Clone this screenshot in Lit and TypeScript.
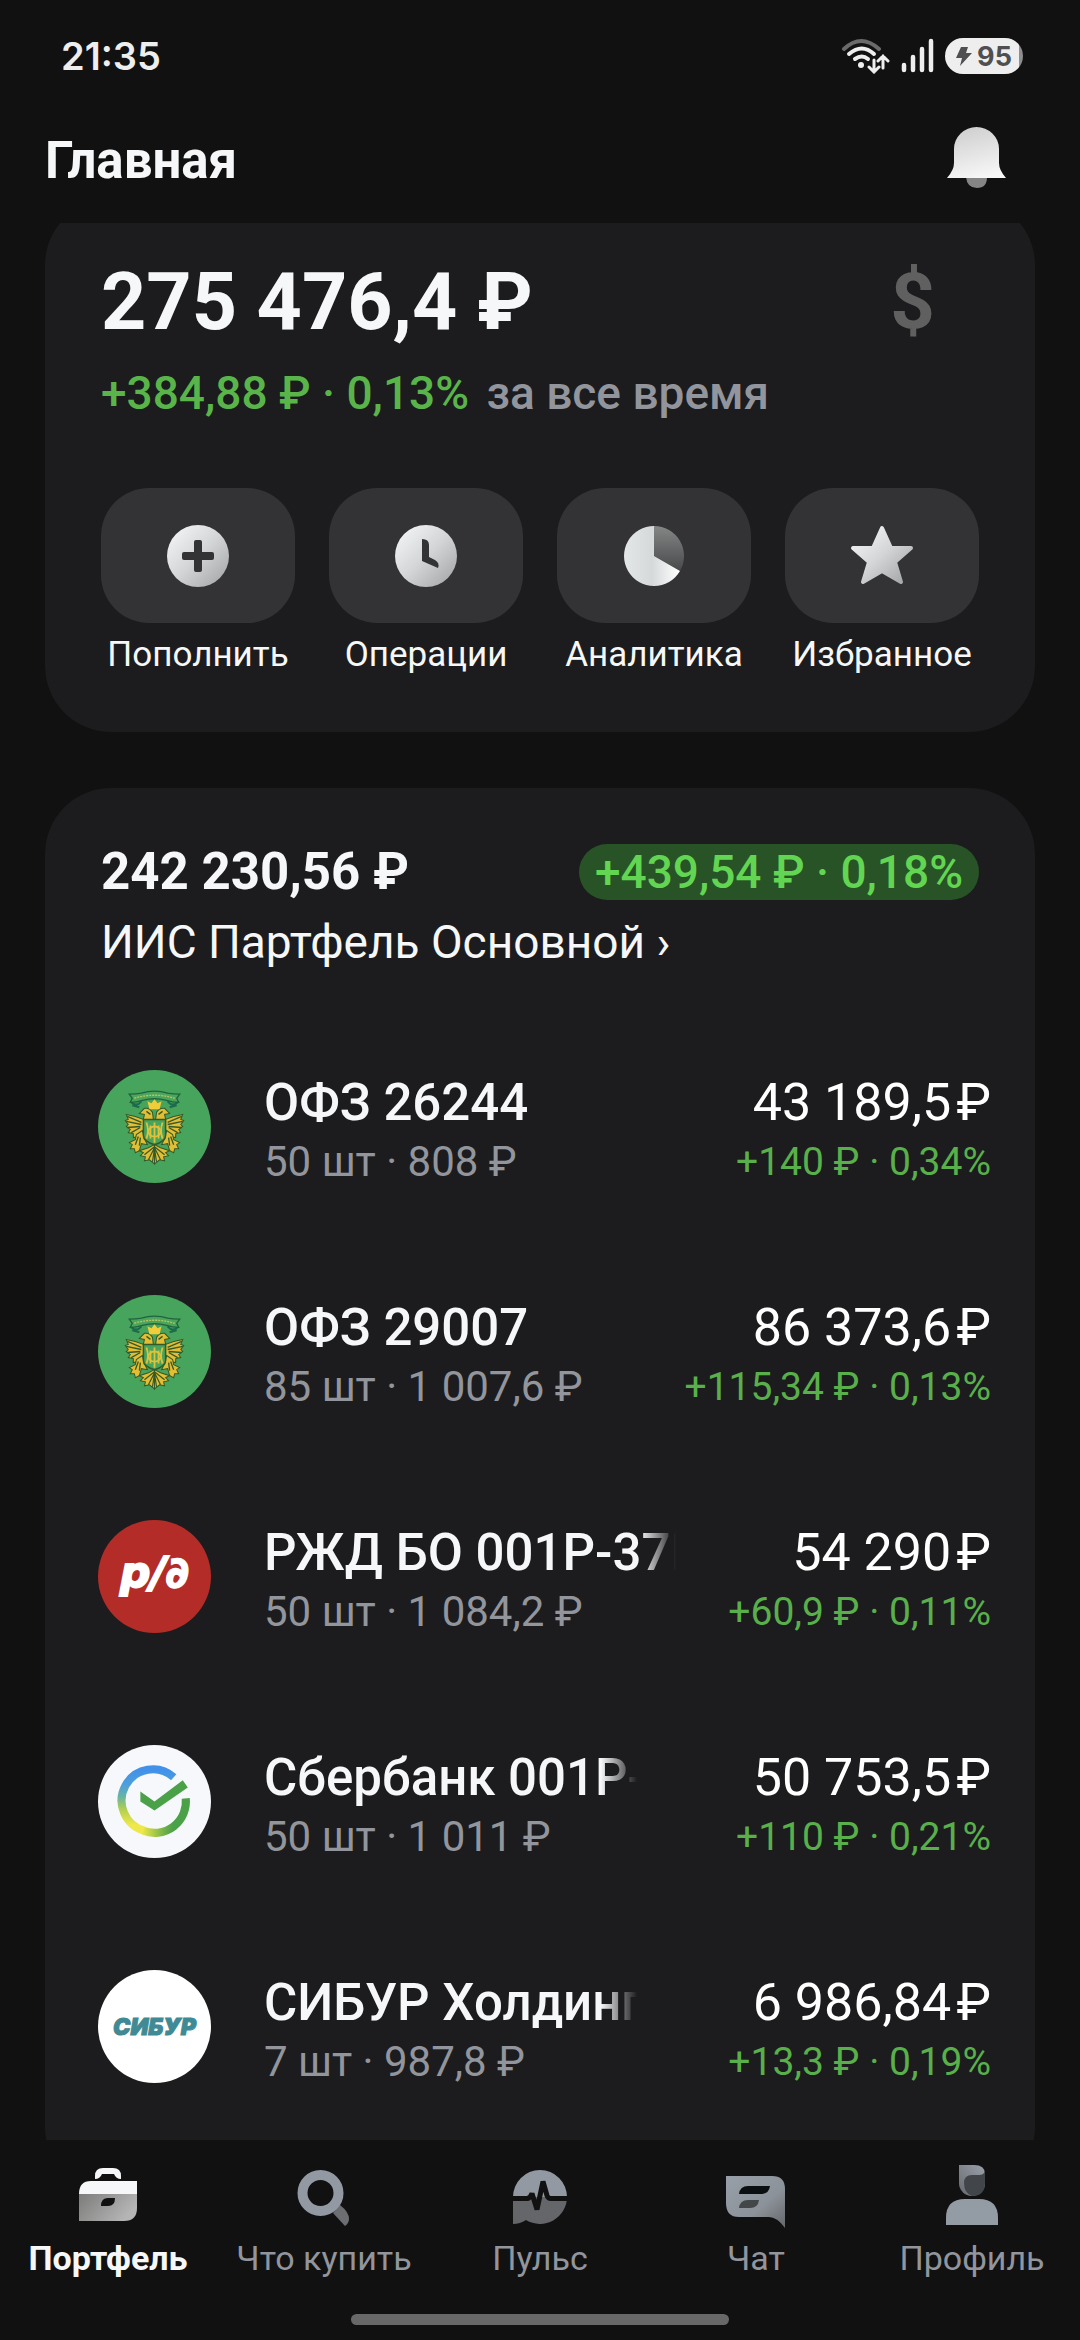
import { LitElement, html, css, svg, nothing } from 'lit';
import type { TemplateResult } from 'lit';
import { customElement, property } from 'lit/decorators.js';
import { classMap } from 'lit/directives/class-map.js';

interface Position {
  logo: string;
  name: string;
  amount: string;
  details: string;
  change: string;
  truncated?: boolean;
}

interface Item {
  icon: string;
  label: string;
}

const ACTIONS: Item[] = [
  { icon: 'plus', label: 'Пополнить' },
  { icon: 'clock', label: 'Операции' },
  { icon: 'pie', label: 'Аналитика' },
  { icon: 'star', label: 'Избранное' },
];

const TABS: Item[] = [
  { icon: 'briefcase', label: 'Портфель' },
  { icon: 'search', label: 'Что купить' },
  { icon: 'pulse', label: 'Пульс' },
  { icon: 'chat', label: 'Чат' },
  { icon: 'profile', label: 'Профиль' },
];

// \u200A keeps the rouble sign close to the amount
const POSITIONS: Position[] = [
  { logo: 'ofz', name: 'ОФЗ 26244', amount: '43 189,5\u200A₽', details: '50 шт · 808 ₽', change: '+140 ₽ · 0,34%' },
  { logo: 'ofz', name: 'ОФЗ 29007', amount: '86 373,6\u200A₽', details: '85 шт · 1 007,6 ₽', change: '+115,34 ₽ · 0,13%' },
  { logo: 'rzd', name: 'РЖД БО 001P-37R', amount: '54 290\u200A₽', details: '50 шт · 1 084,2 ₽', change: '+60,9 ₽ · 0,11%', truncated: true },
  { logo: 'sber', name: 'Сбербанк 001P-SBER', amount: '50 753,5\u200A₽', details: '50 шт · 1 011 ₽', change: '+110 ₽ · 0,21%', truncated: true },
  { logo: 'sibur', name: 'СИБУР Холдинг', amount: '6 986,84\u200A₽', details: '7 шт · 987,8 ₽', change: '+13,3 ₽ · 0,19%', truncated: true },
];

const silver = svg`
  <linearGradient id="silver" x1="0" y1="0" x2="1" y2="1">
    <stop offset="0.1" stop-color="#f0f2f3" />
    <stop offset="0.5" stop-color="#d3d5d6" />
    <stop offset="0.9" stop-color="#a9abac" />
  </linearGradient>`;

const actionIcons: Record<string, TemplateResult> = {
  plus: html`<svg viewBox="0 0 64 64" aria-hidden="true">
    <defs>${silver}</defs>
    <circle cx="32" cy="32" r="31" fill="url(#silver)" />
    <path d="M28 18q0-2 2-2h4q2 0 2 2v10h10q2 0 2 2v4q0 2-2 2H36v10q0 2-2 2h-4q-2 0-2-2V36H18q-2 0-2-2v-4q0-2 2-2h10z" fill="#333335" />
  </svg>`,
  clock: html`<svg viewBox="0 0 64 64" aria-hidden="true">
    <defs>${silver}</defs>
    <circle cx="32" cy="32" r="31" fill="url(#silver)" />
    <path d="M28 15q7 0 7 6v12l6 3q5 3 3 8L28 37z" fill="#333335" />
  </svg>`,
  pie: html`<svg viewBox="0 0 64 64" aria-hidden="true">
    <defs>
      <linearGradient id="slice" x1="0" y1="0" x2="0" y2="1">
        <stop offset="0" stop-color="#858686" />
        <stop offset="1" stop-color="#48494a" />
      </linearGradient>
      <linearGradient id="rest" x1="0" y1="0" x2="1" y2="0">
        <stop offset="0" stop-color="#e4e7e8" />
        <stop offset="0.5" stop-color="#d6d9da" />
        <stop offset="1" stop-color="#ffffff" />
      </linearGradient>
    </defs>
    <path d="M32 32V2A30 30 0 0 1 58 47z" fill="url(#slice)" />
    <path d="M32 32V2A30 30 0 1 0 58 47z" fill="url(#rest)" />
  </svg>`,
  star: html`<svg viewBox="0 0 64 64" aria-hidden="true">
    <defs>${silver}</defs>
    <path
      d="M32 4 41 24 61 24 45 38 51 58 32 47 13 58 19 38 3 24 23 24z"
      fill="url(#silver)" stroke="url(#silver)" stroke-width="4" stroke-linejoin="round"
    />
  </svg>`,
};

const tabIcons: Record<string, TemplateResult> = {
  briefcase: html`<svg viewBox="0 0 72 72" aria-hidden="true">
    <defs>
      <linearGradient id="case" x1="0" y1="0" x2="1" y2="0.4">
        <stop offset="0" stop-color="#7c7d7b" />
        <stop offset="1" stop-color="#b4b5b4" />
      </linearGradient>
    </defs>
    <path d="M23 19v-3q0-8 8-8h10q8 0 8 8v3q-5 0-7-5H30q-2 5-7 5z" fill="#f6f7f8" />
    <path d="M7 34q0-13 12-13h46v13z" fill="#f6f7f8" />
    <path d="M7 34h58v14q0 13-13 13H7z" fill="url(#case)" />
    <path d="M29 46q0-8 7-8h7q0 8-7 8z" fill="#111" />
  </svg>`,
  search: html`<svg viewBox="0 0 72 72" aria-hidden="true">
    <path d="M45 53 52 45q9 7 9 14 0 4-4 7z" fill="#6d6e72" />
    <circle cx="32.5" cy="33" r="18" fill="none" stroke="#9299a2" stroke-width="10" />
  </svg>`,
  pulse: html`<svg viewBox="0 0 72 72" aria-hidden="true">
    <path d="M9 37a27 27 0 0 1 54 0z" fill="#9299a2" />
    <path d="M9 37h54a27 27 0 0 1-41 23q-6 4-13 4z" fill="#65666a" />
    <path d="M8 38.5h15q3 0 5-5l5 16 6-28 4 14q1 3 4 3h17" fill="none" stroke="#111" stroke-width="5" stroke-linejoin="bevel" />
  </svg>`,
  chat: html`<svg viewBox="0 0 72 72" aria-hidden="true">
    <defs>
      <linearGradient id="bubble" x1="0" y1="0" x2="1" y2="1">
        <stop offset="0" stop-color="#989fa8" />
        <stop offset="0.6" stop-color="#8c9299" />
        <stop offset="1" stop-color="#65676a" />
      </linearGradient>
    </defs>
    <path d="M6 16h46q13 0 13 13v39Q57 57 49 57H19Q6 57 6 43z" fill="url(#bubble)" />
    <path d="M19 34q1-8 9-8h22q-1 8-9 8z" fill="#0b0f12" />
    <path d="M19 48q1-8 9-8h11q-1 8-9 8z" fill="#43474a" />
  </svg>`,
  profile: html`<svg viewBox="0 0 72 72" aria-hidden="true">
    <defs>
      <linearGradient id="hair" x1="1" y1="0" x2="0" y2="1">
        <stop offset="0" stop-color="#9aa1aa" />
        <stop offset="1" stop-color="#66696e" />
      </linearGradient>
    </defs>
    <path d="M23 5h15q11 0 11 9v9a13 13 0 0 1-26 0z" fill="url(#hair)" />
    <path d="M28 23q0-8 8-8h7q5 0 6-4v12q0 13-13 13-8-3-8-13z" fill="#42464a" />
    <path d="M10 65V58q0-19 19-19h14q19 0 19 19v7z" fill="#939ba5" />
  </svg>`,
};

// Left half of the emblem; it is mirrored for the right one
const eagleHalf = svg`
  <g fill="#e3bd32" stroke="#34592a" stroke-width="1">
    <path d="M54 42q-3-5-8-4l-5 5 5 1-1 5-8-3-9-2 2 5-3 1 3 4-2 2 4 3-2 3 5 1 0 4 6-1 5-8V50h9z" />
    <path d="M44 60l-6 4-1 5-6 3 3 2-2 4 4 0 1 4 4-2 2-7 6 1-3-6z" />
    <path d="M56 74l-6 3-9 3 4 2-3 3 5 1-1 4 5-1 5 4z" />
  </g>
  <path d="M29 46l14 6M28 51l15 3M29 57l13-1M33 62l9-5M40 66l-3 8M42 67l-1 8M48 41l4 3" fill="none" stroke="#34592a" stroke-width="1.3" />
  <path d="M56 76l-10 8M56 77l-6 12M56 78l-2 13" fill="none" stroke="#34592a" stroke-width="1.2" />
  <path d="M33 32q5 5 10-1M34 35l7 2" fill="none" stroke="#1c6b4c" stroke-width="2" />`;

const logos: Record<string, TemplateResult> = {
  ofz: html`<svg viewBox="0 0 112 112" aria-hidden="true">
    <circle cx="56" cy="56" r="56" fill="#47a45c" />
    ${eagleHalf}
    <g transform="matrix(-1 0 0 1 112 0)">${eagleHalf}</g>
    <path d="M31 24q7 0 12-1 13-4 26 0 5 1 12 1l-3 4 2 4q-6 0-12-2-12-3-24 0-6 2-12 2l2-4z" fill="#4ba65c" stroke="#20633f" stroke-width="1.3" />
    <path d="M36 28q20-6 40 0" fill="none" stroke="#b9c565" stroke-width="1.3" stroke-dasharray="2 1" />
    <path d="M51 39l-2-8 4 2 3-4 3 4 4-2-2 8z" fill="#f1cd3a" />
    <path d="M45 49h22v16q0 6-11 9-11-3-11-9z" fill="#47a45c" stroke="#34592a" stroke-width="1.5" />
    <g fill="none" stroke="#dfc13c" stroke-width="1.8">
      <path d="M48 52q3 8 0 16M64 52q-3 8 0 16M56 52v20M52 55v13M60 55v13" />
      <ellipse cx="56" cy="61" rx="6" ry="5" />
    </g>
  </svg>`,
  rzd: html`<svg viewBox="0 0 112 112" aria-hidden="true">
    <circle cx="56" cy="56" r="56" fill="#b32c28" />
    <text class="mark-rzd" x="56" y="66" text-anchor="middle">р/∂</text>
  </svg>`,
  sber: html`<svg viewBox="0 0 112 112" aria-hidden="true">
    <defs>
      <linearGradient id="ring-left" x1="0" y1="0" x2="0" y2="1">
        <stop offset="0" stop-color="#4190ea" />
        <stop offset="0.25" stop-color="#4f9fdd" />
        <stop offset="0.45" stop-color="#68b5a0" />
        <stop offset="0.65" stop-color="#b2cf50" />
        <stop offset="0.9" stop-color="#eee84a" />
      </linearGradient>
      <linearGradient id="ring-right" x1="0" y1="0" x2="1" y2="0">
        <stop offset="0" stop-color="#e6e54a" />
        <stop offset="0.5" stop-color="#6fb048" />
        <stop offset="0.7" stop-color="#4aa148" />
      </linearGradient>
    </defs>
    <circle cx="56" cy="56" r="56" fill="#f6f8fb" />
    <g fill="none" stroke-width="8">
      <path d="M75 32A31 31 0 1 0 46 85" stroke="url(#ring-left)" />
      <path d="M45 85A31 31 0 0 0 87 53" stroke="url(#ring-right)" />
    </g>
    <path d="M42 46 56 56 84 35 89 42 56 65 42 56z" fill="#4aa148" />
  </svg>`,
  sibur: html`<svg viewBox="0 0 112 112" aria-hidden="true">
    <circle cx="56" cy="56" r="56" fill="#fff" />
    <text class="mark-sibur" x="56" y="64" text-anchor="middle">СИБУР</text>
  </svg>`,
};

@customElement('status-bar')
export class StatusBar extends LitElement {
  static styles = css`
    :host {
      display: flex;
      align-items: center;
      justify-content: space-between;
      height: 112px;
      padding: 0 57px 0 61px;
      font-family: Inter, sans-serif;
      color: #eee;
    }

    .time {
      font-size: 38px;
      font-weight: 600;
    }

    .system {
      display: flex;
      align-items: center;
      gap: 11px;
    }

    .wifi {
      width: 49px;
      height: 36px;
    }

    .signal {
      width: 33px;
      height: 36px;
    }

    .battery {
      display: flex;
      align-items: center;
      justify-content: center;
      gap: 5px;
      box-sizing: border-box;
      width: 78px;
      height: 36px;
      border-radius: 18px;
      background: linear-gradient(to right, #eee 74px, #8e8e8e 74px);
      color: #4f4f51;
      font-size: 27px;
      font-weight: 700;
    }

    .bolt {
      width: 16px;
      height: 20px;
    }
  `;

  render() {
    return html`
      <span class="time">21:35</span>
      <div class="system">
        <svg class="wifi" viewBox="0 0 49 36" aria-hidden="true">
          <g fill="none" stroke-width="4" stroke-linecap="round">
            <path d="M3 11q17-16 35 0" stroke="#6a6a6a" />
            <path d="M8 16q13-11 25 0M14 21q7-5 13 0" stroke="#eee" />
            <path d="M33 22v12M28 29l5 5 5-5M42 30V18M37 23l5-5 5 5" stroke="#eee" stroke-width="3" />
          </g>
          <circle cx="20" cy="27" r="3" fill="#eee" />
        </svg>
        <svg class="signal" viewBox="0 0 33 36" aria-hidden="true">
          <path d="M3 27v5M12 19v13M21 11v21M30 3v29" stroke="#eee" stroke-width="4.5" stroke-linecap="round" />
        </svg>
        <div class="battery">
          <svg class="bolt" viewBox="0 0 16 20" aria-hidden="true">
            <path d="M5 1h7l-2 6h6L4 20l2-8H0z" fill="#4f4f51" />
          </svg>
          <span>95</span>
        </div>
      </div>
    `;
  }
}

@customElement('position-row')
export class PositionRow extends LitElement {
  static styles = css`
    :host {
      display: block;
    }

    .row {
      display: flex;
      gap: 53px;
      color: #f6f7f8;
      text-decoration: none;
    }

    .logo {
      flex: none;
      width: 113px;
      height: 113px;
    }

    .logo svg {
      display: block;
    }

    .body {
      flex: 1;
      min-width: 0;
    }

    .line {
      display: flex;
      justify-content: space-between;
      white-space: nowrap;
    }

    .line--main {
      gap: 116px;
      font-size: 51px;
      line-height: 66px;
    }

    .line--sub {
      font-size: 42px;
      line-height: 52px;
      color: #92959c;
    }

    .name {
      min-width: 0;
      overflow: hidden;
      font-weight: 500;
    }

    .name--truncated {
      -webkit-mask-image: linear-gradient(to left, transparent, #000 36px);
      mask-image: linear-gradient(to left, transparent, #000 36px);
    }

    .amount {
      flex: none;
      font-size: 52px;
      color: #fff;
    }

    .change {
      font-size: 39px;
      color: #59b04b;
    }

    .mark-rzd {
      font: italic bold 42px 'DejaVu Sans', sans-serif;
      fill: #fff;
      stroke: #fff;
      stroke-width: 2px;
    }

    .mark-sibur {
      font: italic 900 23px Inter, sans-serif;
      fill: #3f8a94;
      stroke: #3f8a94;
      stroke-width: 1px;
    }
  `;

  @property({ attribute: false })
  position?: Position;

  render() {
    const p = this.position;
    if (!p) return nothing;
    return html`
      <a class="row" href="#">
        <div class="logo">${logos[p.logo]}</div>
        <div class="body">
          <div class="line line--main">
            <span class=${classMap({ name: true, 'name--truncated': !!p.truncated })}>${p.name}</span>
            <span class="amount">${p.amount}</span>
          </div>
          <div class="line line--sub">
            <span>${p.details}</span>
            <span class="change">${p.change}</span>
          </div>
        </div>
      </a>
    `;
  }
}

@customElement('app-root')
export class AppRoot extends LitElement {
  static styles = css`
    :host {
      display: flex;
      flex-direction: column;
      height: 100vh;
      overflow: hidden;
      background: #111;
      color: #f6f7f8;
      font-family: Roboto, sans-serif;
    }

    h1,
    h2,
    p,
    ul {
      margin: 0;
      padding: 0;
    }

    button {
      padding: 0;
      border: 0;
      background: none;
      color: inherit;
      font: inherit;
    }

    svg {
      display: block;
    }

    .header {
      display: flex;
      align-items: center;
      justify-content: space-between;
      height: 96px;
      padding: 0 74px 15px 45px;
    }

    .header__title {
      font-size: 51px;
      font-weight: 700;
    }

    .header__bell svg {
      width: 60px;
      height: 66px;
    }

    .content {
      flex: 1;
      min-height: 0;
      overflow: hidden;
      padding: 0 45px;
    }

    .card {
      border-radius: 66px;
      background: #1c1c1e;
    }

    /* scrolled slightly under the header */
    .card--summary {
      margin-top: -24px;
      padding: 57px 56px;
    }

    .balance {
      display: flex;
      align-items: center;
      justify-content: space-between;
      padding-right: 44px;
      line-height: 92px;
    }

    .balance__value {
      font-size: 79px;
      font-weight: 700;
    }

    .balance__currency {
      font-size: 78px;
      font-weight: 700;
      color: #606060;
    }

    .profit {
      margin-top: 17px;
      font-size: 46px;
      font-weight: 500;
      line-height: 56px;
      color: #92959c;
    }

    .profit__value {
      margin-right: 6px;
      color: #59b54a;
    }

    .actions {
      display: grid;
      grid-template-columns: repeat(4, 1fr);
      gap: 34px;
      margin-top: 67px;
    }

    .action {
      display: flex;
      flex-direction: column;
      align-items: stretch;
      gap: 12px;
      font-size: 35px;
      line-height: 40px;
    }

    .action__tile {
      display: flex;
      align-items: center;
      justify-content: center;
      height: 135px;
      border-radius: 48px;
      background: #333335;
    }

    .action__tile svg {
      width: 64px;
      height: 64px;
    }

    .card--account {
      margin-top: 56px;
      padding: 56px 44px 105px 53px;
    }

    .account {
      display: flex;
      align-items: center;
      justify-content: space-between;
      padding: 0 12px 0 3px;
      line-height: 56px;
    }

    .account__value {
      font-size: 51px;
      font-weight: 700;
    }

    .account__change {
      padding: 0 16px;
      border-radius: 28px;
      background: #285326;
      color: #62d552;
      font-size: 46px;
      font-weight: 500;
    }

    .account__name {
      display: block;
      margin-top: 14px;
      padding-left: 3px;
      font-size: 46px;
      line-height: 56px;
      color: inherit;
      text-decoration: none;
    }

    .positions {
      display: flex;
      flex-direction: column;
      gap: 107px;
      margin-top: 100px;
      list-style: none;
    }

    .tabs {
      display: grid;
      grid-template-columns: repeat(5, 1fr);
      padding-top: 20px;
    }

    .tab {
      display: flex;
      flex-direction: column;
      align-items: center;
      gap: 6px;
      font-size: 34px;
      line-height: 40px;
      color: #92959c;
      text-decoration: none;
      white-space: nowrap;
    }

    .tab--active {
      color: #f6f7f8;
      font-weight: 700;
    }

    .tab svg {
      width: 72px;
      height: 72px;
    }

    .home-indicator {
      align-self: center;
      width: 35%;
      height: 11px;
      margin: 36px 0 15px;
      border-radius: 6px;
      background: #686868;
    }
  `;

  render() {
    return html`
      <status-bar></status-bar>
      <header class="header">
        <h1 class="header__title">Главная</h1>
        <button class="header__bell" aria-label="Уведомления">
          <svg viewBox="0 0 60 66" aria-hidden="true">
            <defs>
              <linearGradient id="bell" x1="0.3" y1="0" x2="0.6" y2="1">
                <stop offset="0" stop-color="#cfcfcf" />
                <stop offset="1" stop-color="#f7f7f7" />
              </linearGradient>
            </defs>
            <path d="M20 50h21q0 11-10 11T20 50z" fill="#858585" />
            <path d="M1 51q7-8 7-15V22a22.5 22 0 0 1 45 0v14q0 7 7 15z" fill="url(#bell)" />
          </svg>
        </button>
      </header>

      <main class="content">
        <section class="card card--summary">
          <div class="balance">
            <p class="balance__value">275 476,4 ₽</p>
            <button class="balance__currency" aria-label="Показать в долларах">$</button>
          </div>
          <p class="profit"><span class="profit__value">+384,88 ₽ · 0,13%</span> за все время</p>
          <div class="actions">
            ${ACTIONS.map(
              (a) => html`
                <button class="action">
                  <span class="action__tile">${actionIcons[a.icon]}</span>
                  <span>${a.label}</span>
                </button>
              `
            )}
          </div>
        </section>

        <section class="card card--account">
          <div class="account">
            <h2 class="account__value">242 230,56 ₽</h2>
            <span class="account__change">+439,54 ₽ · 0,18%</span>
          </div>
          <a class="account__name" href="#">ИИС Партфель Основной ›</a>
          <ul class="positions">
            ${POSITIONS.map((p) => html`<li><position-row .position=${p}></position-row></li>`)}
          </ul>
        </section>
      </main>

      <nav class="tabs">
        ${TABS.map(
          (t, i) => html`
            <a class=${classMap({ tab: true, 'tab--active': i === 0 })} href="#">
              ${tabIcons[t.icon]}
              <span>${t.label}</span>
            </a>
          `
        )}
      </nav>
      <div class="home-indicator"></div>
    `;
  }
}

declare global {
  interface HTMLElementTagNameMap {
    'app-root': AppRoot;
    'status-bar': StatusBar;
    'position-row': PositionRow;
  }
}
